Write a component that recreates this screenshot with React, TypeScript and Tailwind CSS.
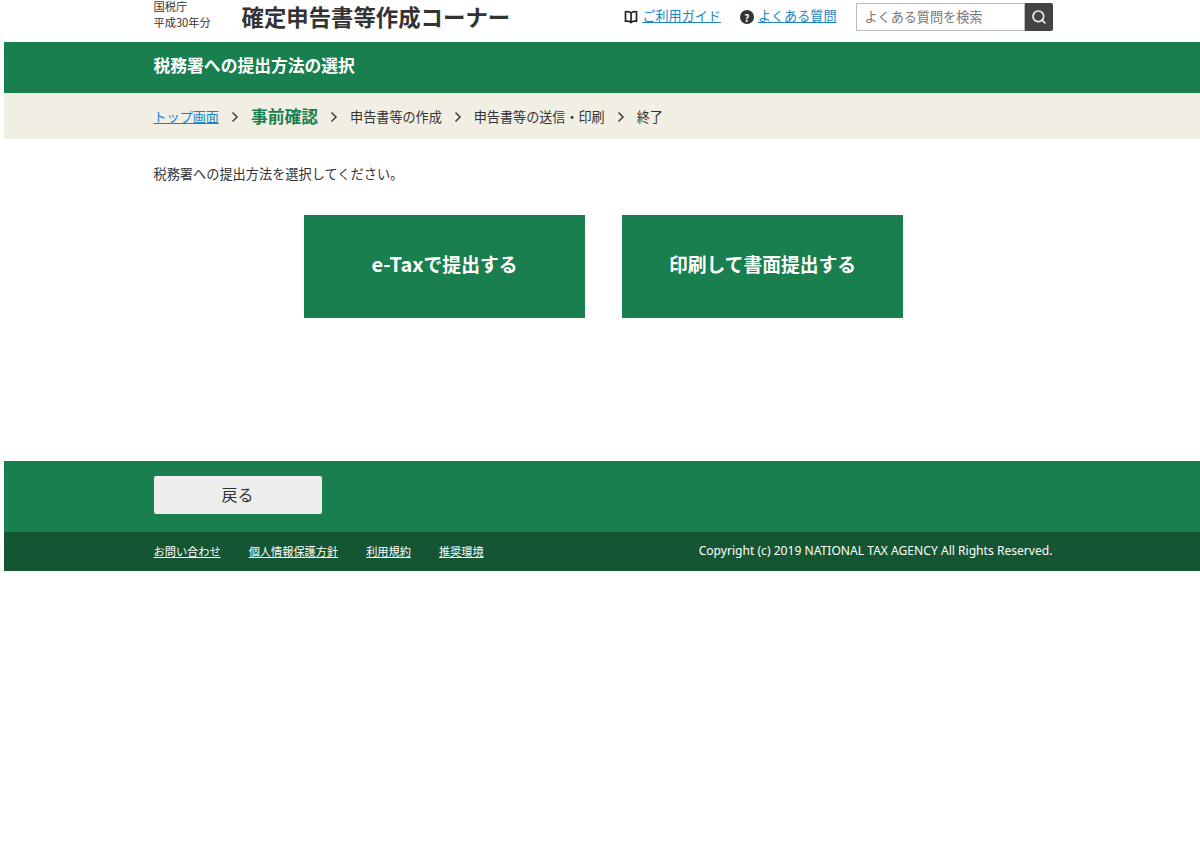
import { Search } from "lucide-react";

function Chevron() {
  return (
    <svg viewBox="0 0 8 12" className="w-2 h-3 mx-3 text-[#444]" fill="none" stroke="currentColor" strokeWidth="1.6">
      <path d="M1.5 1.5 6 6l-4.5 4.5" />
    </svg>
  );
}

function Book() {
  return (
    <svg viewBox="0 0 14 14" className="w-3.5 h-3.5 mr-1" fill="none" stroke="#222" strokeWidth="1.7">
      <path d="M7 3C6 1.800 3.500 1.500 1.500 1.800v9.400c2-.3 4.500 0 5.500 1.200 1-1.200 3.500-1.500 5.500-1.200V1.800C10.500 1.500 8 1.800 7 3Zm0 0v9.400" />
    </svg>
  );
}

export default function App() {
  return (
    <div className="h-screen overflow-hidden bg-white pl-1 font-['Noto_Sans_CJK_JP','Liberation_Sans',sans-serif] text-[#333]">
      <div className="w-[1199px]">
        <header className="h-[42px] w-[900px] mx-auto flex items-center pb-2">
          <div className="w-[88px] self-start text-[11.2px]">
            <div className="leading-3">国税庁</div>
            <div className="leading-5">平成30年分</div>
          </div>
          <div className="text-[22.4px] font-bold">確定申告書等作成コーナー</div>
          <div className="ml-auto mr-px flex items-center text-[13.1px]">
            <Book />
            <a className="mb-0.5 text-[#1a86c8] underline">ご利用ガイド</a>
            <span className="ml-[19px] mr-1 w-3.5 h-3.5 rounded-full bg-[#333] text-white text-[10px] font-bold flex items-center justify-center">?</span>
            <a className="mb-0.5 text-[#1a86c8] underline">よくある質問</a>
            <div className="ml-[19px] flex h-7 w-[197px]">
              <div className="flex-1 border border-[#bbb] px-2 flex items-center text-[#777]">よくある質問を検索</div>
              <div className="w-7 bg-[#444] rounded-r-xs flex items-center justify-center">
                <Search className="w-4 h-4 text-[#eee]" strokeWidth={2.5} />
              </div>
            </div>
          </div>
        </header>
        <div className="bg-[#1a7f4e] h-[51px] flex items-center pb-1">
          <h1 className="w-[900px] mx-auto text-white font-bold text-[16.8px]">税務署への提出方法の選択</h1>
        </div>
        <div className="bg-[#f1efe4] h-[46px] flex items-center pt-0.5">
          <div className="w-[900px] mx-auto flex items-center text-[13.1px]">
            <a className="text-[#1a86c8] underline">トップ画面</a>
            <Chevron />
            <span className="text-[16.8px] font-bold text-[#1a7f4e]">事前確認</span>
            <Chevron />
            <span>申告書等の作成</span>
            <Chevron />
            <span>申告書等の送信・印刷</span>
            <Chevron />
            <span>終了</span>
          </div>
        </div>
        <main className="h-[322px] w-[900px] mx-auto pt-6">
          <p className="text-[13.2px] leading-5.5">税務署への提出方法を選択してください。</p>
          <div className="mt-7.5 flex justify-center gap-[37px]">
            <button className="w-[281px] h-[103px] pb-1 bg-[#1a7f4e] text-white font-bold text-[18.8px]">
              <span className="text-xl">e-Tax</span>で提出する
            </button>
            <button className="w-[281px] h-[103px] pb-1 bg-[#1a7f4e] text-white font-bold text-[18.8px]">印刷して書面提出する</button>
          </div>
        </main>
        <div className="bg-[#1a7f4e] h-[71px] flex items-center pb-1">
          <div className="w-[900px] mx-auto">
            <button className="w-[168px] h-[38px] pb-0.5 bg-[#eee] rounded-xs text-base">戻る</button>
          </div>
        </div>
        <footer className="bg-[#145633] h-[39px] flex items-center">
          <div className="w-[900px] mx-auto flex items-center text-white text-[11.2px]">
            <div className="flex gap-7">
              <a className="underline">お問い合わせ</a>
              <a className="underline">個人情報保護方針</a>
              <a className="underline">利用規約</a>
              <a className="underline">推奨環境</a>
            </div>
            <div className="ml-auto mr-px font-['Noto_Sans',sans-serif] text-[12.1px]">Copyright (c) 2019 NATIONAL TAX AGENCY All Rights Reserved.</div>
          </div>
        </footer>
      </div>
    </div>
  );
}
